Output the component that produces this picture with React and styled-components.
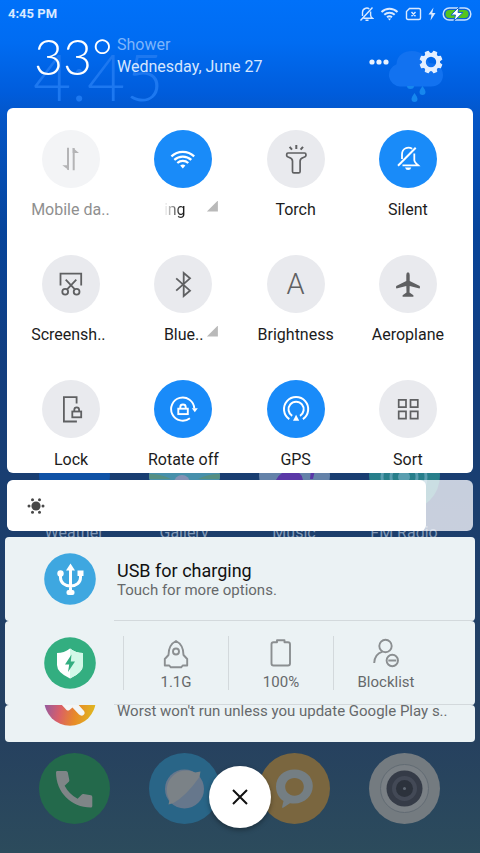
import React, { useState } from "react";
import styled, { createGlobalStyle } from "styled-components";

const GlobalStyle = createGlobalStyle`
  *, *::before, *::after { box-sizing: border-box; }
  body {
    margin: 0;
    font-family: Roboto, "Noto Sans", sans-serif;
    -webkit-font-smoothing: antialiased;
  }
  button { font: inherit; color: inherit; background: none; border: 0; padding: 0; cursor: pointer; }
`;

const Screen = styled.div`
  position: relative;
  min-height: 100vh;
  overflow: hidden;
  background: linear-gradient(
    #0071f9 0%, #006cf2 5%, #005cdb 11%, #0455c6 14%, #06449b 27%,
    #123e80 42%, #1b3e6d 60%, #26415f 87%, #2c4b5c 100%
  );
`;

/* Home screen, dimmed behind the shade */
const Home = styled.div`
  position: absolute;
  inset: 0;
  display: flex;
  flex-direction: column;
  padding: 0 21px 29px 19px;
`;

const HomeHeader = styled.div`
  display: flex;
  justify-content: space-between;
  height: 440px;
  padding: 36px 15px 0 14px;
`;

const HomeClock = styled.div`
  color: #1d78f0;
  font-family: Lato, Roboto, sans-serif;
  font-size: 66px;
  font-weight: 300;
  line-height: 80px;
`;

const HomeRow = styled.div`
  display: grid;
  grid-template-columns: repeat(4, 1fr);
  justify-items: center;
`;

const Dock = styled(HomeRow)`
  margin-top: auto;
`;

const HomeApp = styled.div`
  display: flex;
  flex-direction: column;
  align-items: center;
  gap: 12px;
  color: #8198b5;
  font-size: 16px;
  line-height: 20px;
`;

const AppTile = styled.div`
  width: 71px;
  height: 71px;
  border-radius: 50%;
  background: ${(p) => p.$bg};
  overflow: hidden;
`;

const Art = styled.svg`
  display: block;
  flex: none;
`;

/* Notification shade */
const Shade = styled.div`
  position: relative;
  display: flex;
  flex-direction: column;
  min-height: 100vh;
`;

const StatusBar = styled.div`
  display: flex;
  align-items: center;
  justify-content: space-between;
  height: 27px;
  padding: 0 8px;
  color: #d9e9ff;
  font-size: 13px;
  font-weight: 700;
`;

const StatusIcons = styled.div`
  display: flex;
  align-items: center;
  gap: 6px;
`;

const WeatherBar = styled.header`
  display: flex;
  align-items: center;
  height: 81px;
  padding: 0 37px 24px 34px;
`;

const Temperature = styled.div`
  width: 83px;
  color: #fff;
  font-family: Lato, Roboto, sans-serif;
  font-size: 50px;
  font-weight: 300;
  line-height: 56px;
`;

const Forecast = styled.div`
  flex: 1;
  color: #d5e6ff;
  font-size: 16px;
  line-height: 22px;
`;

const Condition = styled.div`
  color: #7db5fb;
`;

const HeaderActions = styled.div`
  display: flex;
  align-items: center;
  gap: 30px;
  padding-top: 12px;
`;

const Panel = styled.section`
  display: grid;
  grid-template-columns: repeat(4, 1fr);
  row-gap: 33px;
  margin: 0 7px;
  padding: 22px 9px 1px 8px;
  border-radius: 6px;
  background: #fff;
`;

const Tile = styled.button`
  display: flex;
  flex-direction: column;
  align-items: center;
  gap: 10px;
  color: ${(p) => (p.$off ? "#8f8f8f" : "#1c1c1c")};
  font-size: 16px;
  line-height: 24px;
`;

const Disc = styled.span`
  display: flex;
  align-items: center;
  justify-content: center;
  width: 58px;
  height: 58px;
  border-radius: 50%;
  color: ${(p) => (p.$state === "on" ? "#fff" : p.$state === "off" ? "#b4b4b6" : "#5f6062")};
  background: ${(p) => (p.$state === "on" ? "#198bf9" : p.$state === "off" ? "#f3f4f6" : "#e9eaee")};
`;

const AutoLetter = styled.span`
  font-size: 29px;
  font-weight: 300;
  line-height: 30px;
`;

const TileLabel = styled.span`
  display: flex;
  align-items: center;
  gap: 5px;
  width: ${(p) => (p.$cut ? "80px" : "auto")};
  white-space: nowrap;
  padding-left: ${(p) => (p.$more ? "15px" : "0")};
`;

const LabelText = styled.span`
  width: ${(p) => (p.$more ? "38px" : "auto")};
  text-align: left;
  mask-image: ${(p) => (p.$fade ? "linear-gradient(90deg, transparent, #000 45%)" : "none")};
`;

const MoreMark = styled.span`
  width: 11px;
  height: 11px;
  margin-bottom: 8px;
  background: #b9b9b9;
  clip-path: polygon(100% 0, 100% 100%, 0 100%);
`;

const Slider = styled.label`
  position: relative;
  display: block;
  height: 51px;
  margin: 7px 7px 0;
  border-radius: 6px;
  background: rgba(249, 249, 253, 0.78);
  overflow: hidden;
`;

const SliderFill = styled.span`
  display: flex;
  align-items: center;
  height: 100%;
  padding-left: 19px;
  border-radius: 6px;
  background: #fff;
`;

const SliderInput = styled.input`
  position: absolute;
  inset: 0;
  width: 100%;
  height: 100%;
  margin: 0;
  opacity: 0;
`;

const Notifications = styled.section`
  display: flex;
  flex-direction: column;
  margin: 6px 5px 0;
`;

const Notification = styled.article`
  display: flex;
  align-items: stretch;
  height: ${(p) => (p.$peek ? "37px" : "84px")};
  padding-left: 39px;
  border-radius: 4px;
  background: #ebf2f4;
  overflow: hidden;
`;

const NoticeIcon = styled.div`
  display: flex;
  flex: none;
  align-items: ${(p) => (p.$peek ? "flex-end" : "center")};
  width: 70px;
  padding-bottom: ${(p) => (p.$peek ? "16px" : "0")};
`;

const NoticeBody = styled.div`
  display: flex;
  flex: 1;
  flex-direction: column;
  justify-content: ${(p) => (p.$peek ? "flex-end" : "center")};
  min-width: 0;
  padding: ${(p) => (p.$peek ? "0 3px 21px" : "4px 3px 0")};
  border-bottom: ${(p) => (p.$peek ? "0" : "1px solid #d3d9dc")};
`;

const NoticeTitle = styled.div`
  color: #111;
  font-size: 18px;
  line-height: 20px;
`;

const NoticeText = styled.div`
  color: #66696b;
  font-size: 15px;
  line-height: 19px;
  white-space: nowrap;
`;

const Shortcuts = styled.div`
  display: grid;
  flex: 1;
  grid-template-columns: repeat(3, 105px) 1fr;
  align-items: center;
  padding-left: 9px;
  border-bottom: 1px solid #d3d9dc;
`;

const Shortcut = styled.button`
  display: flex;
  flex-direction: column;
  align-items: center;
  justify-content: space-between;
  height: 54px;
  border-left: 1px solid #d3d9dc;
  color: #66696b;
  font-size: 15px;
  line-height: 16px;
`;

const Footer = styled.footer`
  display: flex;
  justify-content: center;
  padding: 24px 0 25px;
`;

const CloseButton = styled.button`
  display: flex;
  align-items: center;
  justify-content: center;
  width: 62px;
  height: 62px;
  border-radius: 50%;
  background: #fff;
  box-shadow: 0 2px 5px rgba(0, 0, 0, 0.35);
`;

const Glyph = ({ children, width = 58, height = 58, stroke = 2, ...rest }) => (
  <Art
    width={width}
    height={height}
    viewBox={`0 0 ${width} ${height}`}
    fill="none"
    stroke="currentColor"
    strokeWidth={stroke}
    aria-hidden="true"
    {...rest}
  >
    {children}
  </Art>
);

const Solid = (props) => <path fill="currentColor" stroke="none" {...props} />;

const icons = {
  data: (
    <Glyph>
      <path d="M26 17.7v22M31.7 18v22.3" />
      <Solid d="M20.3 35.3H27v5zM30.7 17.7l6.3 5.3h-6.3z" />
    </Glyph>
  ),
  wifi: (
    <Glyph stroke={2.2}>
      <path d="M17.4 26.4a16.4 16.4 0 0 1 22.8 0M20.3 29.9a12.5 12.5 0 0 1 17 0M23.3 33a8 8 0 0 1 11 0" />
      <Solid d="M26.2 35.5q2.6-1.8 5.2 0l-2.6 3z" />
    </Glyph>
  ),
  torch: (
    <Glyph stroke={1.7} strokeLinejoin="round">
      <path d="M29.3 15v4M22.6 16.8l2.4 2.9M36 16.8l-2.4 2.9" strokeWidth="2" />
      <path d="M21 23h16.6q1.3 0 1.3 1.2v1.6q-.3 1-2 1.5-3.8 1.2-3.8 3.6v10.6q0 1.4-1.4 1.4h-4.8q-1.4 0-1.4-1.4V30.9q0-2.4-3.8-3.6-1.7-.5-2-1.500v-1.600Q19.700 23 21 23z" />
    </Glyph>
  ),
  silent: (
    <Glyph stroke={1.8}>
      <path d="M19 35.7l17.7-18" strokeWidth="2" />
      <path d="M23 29v-4.500c0-6.500 6.300-8.300 10.200-5.700M35.300 23.500v6.500q0 2 3.800 5.300H23.500" />
      <Solid d="M26 37.500h6.300q-.7 2.500-3.150 2.500t-3.150-2.500z" />
    </Glyph>
  ),
  screenshot: (
    <Glyph stroke={1.8}>
      <path d="M18.500 30.600V18.700h20.700v11.900M23.700 24.700l9.200 9.600M34.300 24.700l-9.200 9.600" />
      <circle cx="23.200" cy="36.700" r="2.900" />
      <circle cx="34.600" cy="36.700" r="2.900" />
    </Glyph>
  ),
  bluetooth: (
    <Glyph stroke={1.8}>
      <path d="M22.200 23.300L36 35.700l-6.300 5.300V18l6.300 5.300-13.800 12.400" />
    </Glyph>
  ),
  plane: (
    <Glyph>
      <Solid d="M29 17.300q1.700 0 1.700 2.700v6L40.800 31q.5 2-.3 2.600L30.700 31l-.2 6.600 3.900 2.600v1.600H23.600v-1.600l3.900-2.600-.2-6.600-9.800 2.600q-.8-.6-.3-2.600L27.300 26v-6q0-2.700 1.700-2.700z" />
    </Glyph>
  ),
  lock: (
    <Glyph stroke={1.8}>
      <path d="M34.600 23.600V17.100H21.900v24.400h13M32.300 31.500v-1.700q0-2.500 2.400-2.500t2.400 2.500v1.700" />
      <rect x="30.300" y="31.500" width="8.900" height="5.800" />
    </Glyph>
  ),
  rotate: (
    <Glyph stroke={1.9}>
      <path d="M40.300 28.500A11.600 11.600 0 1 0 35.900 38.200M26.300 28.700V27q0-2.500 2.700-2.500t2.700 2.500v1.700" />
      <rect x="24.300" y="28.700" width="9.500" height="5.400" />
      <Solid d="M37.800 28.300h6l-3 4z" />
    </Glyph>
  ),
  gps: (
    <Glyph stroke={2}>
      <path d="M22.300 39.100a12.100 12.100 0 1 1 13.600 0M25.200 35.800a7.600 7.600 0 1 1 7.800 0" />
      <Solid d="M29.100 34.800l3.100 5.900H26z" />
    </Glyph>
  ),
  sort: (
    <Glyph stroke={1.7}>
      <path d="M19.700 19.800h7.300v7.300h-7.300zM31.500 19.800h7.300v7.300h-7.300zM19.700 31.300h7.300v7.300h-7.300zM31.500 31.300h7.300v7.300h-7.300z" />
    </Glyph>
  ),
  auto: <AutoLetter>A</AutoLetter>,
};

const tiles = [
  { label: "Mobile da..", icon: "data", state: "off", cut: true },
  { label: "ing", icon: "wifi", state: "on", more: true, fade: true },
  { label: "Torch", icon: "torch" },
  { label: "Silent", icon: "silent", state: "on" },
  { label: "Screensh..", icon: "screenshot", cut: true },
  { label: "Blue..", icon: "bluetooth", more: true },
  { label: "Brightness", icon: "auto" },
  { label: "Aeroplane", icon: "plane" },
  { label: "Lock", icon: "lock" },
  { label: "Rotate off", icon: "rotate", state: "on" },
  { label: "GPS", icon: "gps", state: "on" },
  { label: "Sort", icon: "sort" },
];

const RainCloud = () => (
  <Art width="56" height="68" viewBox="0 0 56 68" aria-hidden="true">
    <path d="M12 50.500a11.500 11.500 0 0 1-3.500-22.300C9 19 16 15 24 15c9 0 14 5 17 12 8 0 14 4 14 12 0 7-5 11.500-12 11.500z" fill="#1272f0" />
    <path d="M19 50h7q0 3-3.500 3t-3.500-3zM34.500 50q3 4 3 6a3 3 0 0 1-6 0q0-2 3-6zM26.500 57q3 4 3 6a3 3 0 0 1-6 0q0-2 3-6z" fill="#1687ee" />
  </Art>
);

const HomeScreen = () => (
  <Home aria-hidden="true">
    <HomeHeader>
      <HomeClock>4:45</HomeClock>
      <RainCloud />
    </HomeHeader>
    <HomeRow>
      <HomeApp>
        <AppTile $bg="#0f52a6" />
        Weather
      </HomeApp>
      <HomeApp>
        <AppTile $bg="#4790ab">
          <Art width="71" height="71" viewBox="0 0 71 71">
            <path d="M0 34q12 0 22 5H0zM71 34q-12 0-22 5h22z" fill="#558f83" />
            <circle cx="33" cy="43" r="8" fill="#8492b5" />
          </Art>
        </AppTile>
        Gallery
      </HomeApp>
      <HomeApp>
        <AppTile $bg="#6482a9">
          <Art width="71" height="71" viewBox="0 0 71 71">
            <path d="M17 40q4-9 15-9t12 9zM52 30h4l-2 9h-3z" fill="#5a38a7" />
          </Art>
        </AppTile>
        Music
      </HomeApp>
      <HomeApp>
        <AppTile $bg="linear-gradient(#247795, #2a8580)">
          <Art width="71" height="71" viewBox="0 0 71 71" fill="none" stroke="#5a9eb0" strokeWidth="3">
            <circle cx="35" cy="37" r="6" fill="#5a9eb0" stroke="none" />
            <circle cx="35" cy="37" r="13" />
            <circle cx="35" cy="37" r="22" />
          </Art>
        </AppTile>
        FM Radio
      </HomeApp>
    </HomeRow>
    <Dock>
      <AppTile $bg="#23694b">
        <Art width="71" height="71" viewBox="0 0 71 71">
          <path d="M18 18h9q1.500 0 1.800 1.500l1.500 7.500q.2 1-.5 1.700l-4.200 4q4.500 8.500 13 13l4-4q.8-.8 1.800-.6l7.500 1.200q1.400.3 1.400 1.700V53q0 1.500-1.500 1.500C32 54.500 17 39 17 19.500q0-1.500 1-1.500z" fill="#7f8587" />
        </Art>
      </AppTile>
      <AppTile $bg="#296587">
        <Art width="71" height="71" viewBox="0 0 71 71">
          <circle cx="35.500" cy="36" r="19.500" fill="#66778c" />
          <path d="M19.500 51.500l1-4.500A19.500 19.500 0 0 1 46 19.600l5.500-1.100-1 5.500Q37 43 24.500 50z" fill="#7b8287" />
        </Art>
      </AppTile>
      <AppTile $bg="#7a663f">
        <Art width="71" height="71" viewBox="0 0 71 71">
          <path
            d="M35.500 16.500c10.500 0 18.300 7 18.300 16.500S46 50.500 35.500 50.500q-2 0-4.500-.3L24.500 54.500q-2 1-1.300-1l1.300-5.500C19.500 45 17 39 17 33.500c0-10 8-17 18.500-17zM35.500 25c-5.500 0-9.300 4-9.300 8.800s3.800 8.900 9.300 8.900 9.300-4 9.300-8.900-3.800-8.800-9.300-8.800z"
            fill="#747e83"
            fillRule="evenodd"
          />
        </Art>
      </AppTile>
      <AppTile $bg="#747b80">
        <Art width="71" height="71" viewBox="0 0 71 71">
          <circle cx="35.500" cy="35.500" r="24" fill="#7a8085" stroke="#626b73" />
          <circle cx="35.500" cy="35.500" r="18" fill="#353b47" />
          <circle cx="35.500" cy="35.500" r="12.500" fill="#434956" />
          <circle cx="35.500" cy="35.500" r="8.500" fill="#2c323c" />
          <circle cx="35.500" cy="35.500" r="1.500" fill="#606873" />
        </Art>
      </AppTile>
    </Dock>
  </Home>
);

const gearTeeth = [0, 1, 2, 3, 4, 5, 6, 7].map((n) => n * 45 + 22.5);

export default function App() {
  const [level, setLevel] = useState(90);

  return (
    <>
      <GlobalStyle />
      <Screen>
        <HomeScreen />
        <Shade>
          <StatusBar>
            <span>4:45 PM</span>
            <StatusIcons>
              <Glyph width={15} height={16} stroke={1.4}>
                <path d="M1.500 14.500L13.500 1.500M3.500 10V6.500C3.500 2.500 8 1 10.300 3M11.600 5.500V9q0 2 1.900 3.300H4.500M6.500 14.300h3" />
              </Glyph>
              <Glyph width={19} height={14} stroke={2}>
                <path d="M1.500 5a11.500 11.500 0 0 1 16 0M4.300 7.800a7.500 7.500 0 0 1 10.400 0M7 10.300a4 4 0 0 1 5 0" />
                <Solid d="M7.800 11.500h3.400L9.500 13.500z" />
              </Glyph>
              <Glyph width={17} height={14} stroke={1.4}>
                <path d="M4.500 1.500H14q1.500 0 1.500 1.500v8q0 1.500-1.500 1.500H3q-1.500 0-1.500-1.500V4.500zM6.500 5l4 4.200M10.500 5l-4 4.200" />
              </Glyph>
              <Glyph width={8} height={14}>
                <Solid d="M5.500.5L.5 7.500h3L2.500 13.500l5-7.500H4.300z" />
              </Glyph>
              <Art width="30" height="14" viewBox="0 0 30 14" aria-hidden="true">
                <rect x="1.200" y="1" width="27.600" height="12" rx="6" fill="#0b5fd6" stroke="#c9e2ff" strokeWidth="1.500" />
                <rect x="3.500" y="3" width="23" height="8" rx="4" fill="#55c41e" />
                <path d="M17 0L9 8h4.500L12 14l9-8.500h-5z" fill="#fff" stroke="#1466cf" strokeWidth="1" />
              </Art>
            </StatusIcons>
          </StatusBar>

          <WeatherBar>
            <Temperature>33°</Temperature>
            <Forecast>
              <Condition>Shower</Condition>
              <div>Wednesday, June 27</div>
            </Forecast>
            <HeaderActions>
              <button aria-label="More">
                <Art width="20" height="6" viewBox="0 0 20 6" fill="#e9f2ff">
                  <circle cx="3" cy="3" r="2.600" />
                  <circle cx="10" cy="3" r="2.600" />
                  <circle cx="17" cy="3" r="2.600" />
                </Art>
              </button>
              <button aria-label="Settings">
                <Art width="24" height="24" viewBox="0 0 24 24" fill="#e4efff">
                  {gearTeeth.map((angle) => (
                    <path key={angle} d="M9.700 4L10.300 1h3.400l.6 3z" stroke="#e4efff" strokeLinejoin="round" transform={`rotate(${angle} 12 12)`} />
                  ))}
                  <circle cx="12" cy="12" r="7.200" fill="none" stroke="#e4efff" strokeWidth="4" />
                </Art>
              </button>
            </HeaderActions>
          </WeatherBar>

          <Panel aria-label="Quick settings">
            {tiles.map(({ label, icon, state, more, fade, cut }) => (
              <Tile key={label} $off={state === "off"} aria-pressed={state === "on"}>
                <Disc $state={state}>{icons[icon]}</Disc>
                <TileLabel $more={more} $cut={cut}>
                  <LabelText $more={more} $fade={fade}>{label}</LabelText>
                  {more && <MoreMark />}
                </TileLabel>
              </Tile>
            ))}
          </Panel>

          <Slider>
            <SliderFill style={{ width: `${level}%` }}>
              <Art width="20" height="20" viewBox="0 0 20 20" fill="#484848" aria-hidden="true">
                <circle cx="10" cy="10" r="4.600" />
                <circle cx="3" cy="10" r="1.500" />
                <circle cx="17" cy="10" r="1.500" />
                <circle cx="6.500" cy="3.700" r="1.500" />
                <circle cx="13.500" cy="3.700" r="1.500" />
                <circle cx="6.500" cy="16.300" r="1.500" />
                <circle cx="13.500" cy="16.300" r="1.500" />
              </Art>
            </SliderFill>
            <SliderInput
              type="range"
              aria-label="Screen brightness"
              value={level}
              onChange={(e) => setLevel(Number(e.target.value))}
            />
          </Slider>

          <Notifications aria-label="Notifications">
            <Notification>
              <NoticeIcon>
                <Art width="52" height="52" viewBox="0 0 52 52" fill="none" stroke="#fff" strokeWidth="3" aria-hidden="true">
                  <circle cx="26" cy="26" r="25.800" fill="#3ea7e0" stroke="none" />
                  <path d="M26.500 15v25M16.500 21v3.500c0 5 4 8.500 10 8.500s10-3.500 10-8.500V21" />
                  <path d="M26.500 10.500l4.500 7h-9zM33.500 17.500h6V23h-6z" fill="#fff" stroke="none" />
                  <circle cx="16.500" cy="20.500" r="3.200" fill="#fff" stroke="none" />
                  <rect x="22.500" y="37" width="8" height="5" rx="2" fill="#fff" stroke="none" />
                </Art>
              </NoticeIcon>
              <NoticeBody>
                <NoticeTitle>USB for charging</NoticeTitle>
                <NoticeText>Touch for more options.</NoticeText>
              </NoticeBody>
            </Notification>

            <Notification>
              <NoticeIcon>
                <Art width="52" height="52" viewBox="0 0 52 52" aria-hidden="true">
                  <circle cx="26" cy="26" r="25.800" fill="#33ae80" />
                  <path d="M26 11.500q6 4.500 13 4.500v12q0 7.500-13 13.500-13-6-13-13.500V16q7 0 13-4.500z" fill="#fff" />
                  <path d="M26 11.500q6 4.500 13 4.500v12q0 7.500-13 13.500z" fill="#d2f8e8" />
                  <path d="M27.500 17.500L21 27.500h4.200L24 35l7-10.500h-4.200z" fill="#33ae80" />
                </Art>
              </NoticeIcon>
              <Shortcuts>
                <Shortcut>
                  <Glyph width={30} height={36} stroke={1.9} color="#8b8f91" strokeLinejoin="round">
                    <path d="M15 5c-5 2.500-7.500 8-7.500 14L3.800 23v6.500h4.500l1.500 1.800h10.400l1.500-1.800h4.500V23l-3.700-4C22.500 13 20 7.500 15 5z" />
                    <circle cx="15" cy="15.500" r="3" />
                  </Glyph>
                  1.1G
                </Shortcut>
                <Shortcut>
                  <Glyph width={30} height={36} stroke={1.9} color="#8b8f91" strokeLinejoin="round">
                    <path d="M7.500 6.300H11V4.200h7.500v2.100H22q2 0 2 2v19.200q0 2-2 2H7.500q-2 0-2-2V8.300q0-2 2-2z" />
                  </Glyph>
                  100%
                </Shortcut>
                <Shortcut>
                  <Glyph width={30} height={36} stroke={1.9} color="#8b8f91">
                    <circle cx="14.500" cy="10" r="6.200" />
                    <path d="M3.200 27q.5-9 8.300-11.300M17.300 24.500h8" />
                    <circle cx="21.300" cy="24.500" r="5.700" />
                  </Glyph>
                  Blocklist
                </Shortcut>
              </Shortcuts>
            </Notification>

            <Notification $peek>
              <NoticeIcon $peek>
                <Art width="52" height="52" viewBox="0 0 52 52" aria-hidden="true">
                  <defs>
                    <linearGradient id="photo" x1="0" y1="0.4" x2="1" y2="0.6">
                      <stop offset="0" stopColor="#8a5aa8" />
                      <stop offset="0.35" stopColor="#d95f68" />
                      <stop offset="0.65" stopColor="#e88a28" />
                      <stop offset="1" stopColor="#dfb71f" />
                    </linearGradient>
                  </defs>
                  <circle cx="26" cy="26" r="25.800" fill="url(#photo)" />
                  <path d="M17 30l5.500 6q1.500 1 3 0l3-2.500 6.500 7q2.500 2 4.500.5t.5-4L32 28z" fill="#f3f6f6" />
                </Art>
              </NoticeIcon>
              <NoticeBody $peek>
                <NoticeText>Worst won't run unless you update Google Play s..</NoticeText>
              </NoticeBody>
            </Notification>
          </Notifications>

          <Footer>
            <CloseButton aria-label="Close">
              <Glyph width={18} height={18} stroke={2} color="#111">
                <path d="M2 2l14 14M16 2L2 16" />
              </Glyph>
            </CloseButton>
          </Footer>
        </Shade>
      </Screen>
    </>
  );
}
